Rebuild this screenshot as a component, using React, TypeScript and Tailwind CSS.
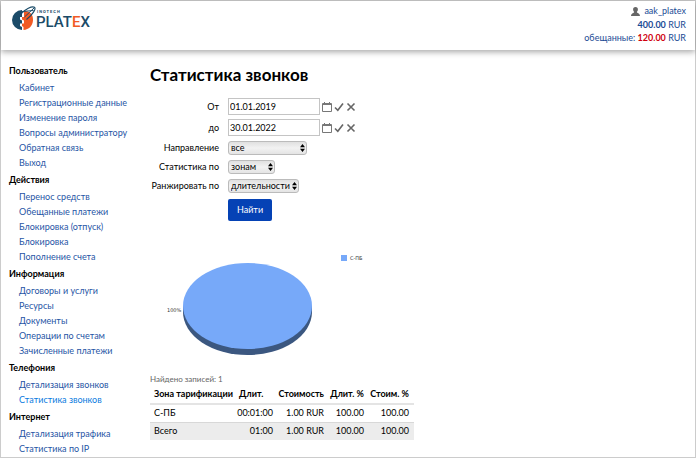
import type { ReactNode } from "react";

type MenuGroup = {
  title: string;
  items: string[];
};

const menu: MenuGroup[] = [
  {
    title: "Пользователь",
    items: [
      "Кабинет",
      "Регистрационные данные",
      "Изменение пароля",
      "Вопросы администратору",
      "Обратная связь",
      "Выход",
    ],
  },
  {
    title: "Действия",
    items: [
      "Перенос средств",
      "Обещанные платежи",
      "Блокировка (отпуск)",
      "Блокировка",
      "Пополнение счета",
    ],
  },
  {
    title: "Информация",
    items: [
      "Договоры и услуги",
      "Ресурсы",
      "Документы",
      "Операции по счетам",
      "Зачисленные платежи",
    ],
  },
  {
    title: "Телефония",
    items: ["Детализация звонков", "Статистика звонков"],
  },
  {
    title: "Интернет",
    items: ["Детализация трафика", "Статистика по IP"],
  },
];

const activeItem = "Статистика звонков";

function Logo() {
  return (
    <svg width="80" height="28" viewBox="0 0 80 28" role="img" aria-label="Inotech Platex">
      <path
        d="M10 5A10 10 0 0 0 10 25V22L8 21V18.500H10V15.500L8 14.500V12H10Z"
        fill="#1b4b68"
      />
      <path
        d="M12 6C18 5.500 21.500 10 21 15.500C20.500 21 17 24.500 11.500 25V22L10 21V18.500H12V15.500L10 14.500V12H12Z"
        fill="#f15a24"
      />
      <path
        d="M9 9C13 4 20 .8 22.500 2.200C24.500 4 20 10 14.500 14.500"
        fill="none"
        stroke="#1b4b68"
        strokeWidth="1.200"
      />
      <path d="M10 6.500L21.500 5.500M12.500 12L22 3" stroke="#1b4b68" strokeWidth="1" />
      <text x="25" y="8" fontSize="4" fontWeight="700" className="fill-[#1b4b68] font-['Roboto',sans-serif] tracking-[1px]">
        INOTECH
      </text>
      <text x="24" y="22" fontSize="15" fontWeight="500" className="fill-[#1b4b68] font-['Roboto',sans-serif]">
        PLAT
        <tspan fill="#f15a24">E</tspan>X
      </text>
    </svg>
  );
}

function Header() {
  return (
    <header className="flex h-[49px] items-start justify-between bg-white pt-[3px] pr-[9px] pl-[11px] shadow-[0_2px_6px_rgba(0,0,0,0.35)]">
      <a href="#home" className="mt-px">
        <Logo />
      </a>
      <div className="text-right leading-[14px] text-[#1a4a94]">
        <a href="#profile" className="flex items-center justify-end gap-1">
          <svg width="9" height="9" viewBox="0 0 9 9" fill="#666">
            <path d="M4.500 0C6.200 0 7 1 6.900 2.500C6.800 3.800 6.300 4.600 5.800 5C5.900 6 8.800 6 9 9H0C.2 6 3.100 6 3.200 5C2.700 4.600 2.200 3.800 2.100 2.500C2 1 2.800 0 4.500 0Z" />
          </svg>
          aak_platex
        </a>
        <p className="leading-[13px]">
          <b>400.00</b> RUR
        </p>
        <p>
          обещанные: <b className="text-[#d0000f]">120.00</b> RUR
        </p>
      </div>
    </header>
  );
}

function Sidebar() {
  return (
    <nav className="w-[140px] shrink-0 pl-2">
      {menu.map((group) => (
        <section key={group.title}>
          <h2 className="leading-[19px] font-bold text-black">{group.title}</h2>
          <ul className="pl-[10px] leading-[15px] whitespace-nowrap">
            {group.items.map((item) => (
              <li key={item}>
                <a
                  href="#menu"
                  className={item === activeItem ? "text-[#0a7be0]" : "text-[#1f55a5]"}
                >
                  {item}
                </a>
              </li>
            ))}
          </ul>
        </section>
      ))}
    </nav>
  );
}

function DateField({ id, value }: { id: string; value: string }) {
  return (
    <div className="flex items-center gap-[2px]">
      <input
        id={id}
        type="text"
        defaultValue={value}
        className="h-[17px] w-[92px] border border-[#c4c4c4] bg-white px-px text-black"
      />
      <button type="button" aria-label="Календарь">
        <svg width="10" height="10" viewBox="0 0 10 10" fill="none" stroke="#777">
          <path d="M.5 1.500H9.500V9.500H.5ZM.5 2.500H9.500M2.500 0V3M7.500 0V3" />
        </svg>
      </button>
      <button type="button" aria-label="Применить">
        <svg width="10" height="10" viewBox="0 0 10 10" fill="none" stroke="#666" strokeWidth="1.600">
          <path d="M1 5.500L3.800 8.300L9 1.500" />
        </svg>
      </button>
      <button type="button" aria-label="Очистить">
        <svg width="10" height="10" viewBox="0 0 10 10" fill="none" stroke="#666" strokeWidth="1.600">
          <path d="M1.500 1.500L8.500 8.500M8.500 1.500L1.500 8.500" />
        </svg>
      </button>
    </div>
  );
}

function SelectField({
  id,
  value,
  className,
}: {
  id: string;
  value: string;
  className: string;
}) {
  return (
    <div className={`relative ${className}`}>
      <select
        id={id}
        className="block h-[14px] w-full appearance-none rounded-[3px] border border-[#bbb] bg-linear-to-b from-[#e0e0e0] via-[#f2f2f2] to-[#e4e4e4] pl-[2px] leading-3 text-black"
      >
        <option>{value}</option>
      </select>
      <svg
        width="5"
        height="8"
        viewBox="0 0 5 8"
        className="pointer-events-none absolute top-[3px] right-[2px] fill-black"
      >
        <path d="M2.500 0L5 3.300H0ZM2.500 8L5 4.700H0Z" />
      </svg>
    </div>
  );
}

function Field({ id, label, children }: { id: string; label: string; children: ReactNode }) {
  return (
    <div className="flex items-center gap-[9px]">
      <label htmlFor={id} className="w-[69px] shrink-0 text-right whitespace-nowrap">
        {label}
      </label>
      {children}
    </div>
  );
}

function SearchForm() {
  return (
    <form>
      <div className="flex flex-col gap-[5px]">
        <div className="flex flex-col gap-1">
          <Field id="from" label="От">
            <DateField id="from" value="01.01.2019" />
          </Field>
          <Field id="to" label="до">
            <DateField id="to" value="30.01.2022" />
          </Field>
        </div>
        <Field id="direction" label="Направление">
          <SelectField id="direction" value="все" className="w-[79px]" />
        </Field>
        <Field id="stat" label="Статистика по">
          <SelectField id="stat" value="зонам" className="w-[47px]" />
        </Field>
        <Field id="rank" label="Ранжировать по">
          <SelectField id="rank" value="длительности" className="w-[71px]" />
        </Field>
      </div>
      <button
        type="button"
        className="mt-[6px] ml-[78px] h-[22px] w-11 rounded-[2px] bg-[#0542b5] text-white"
      >
        Найти
      </button>
    </form>
  );
}

function PieChart() {
  return (
    <svg
      width="240"
      height="110"
      viewBox="0 0 240 110"
      className="mt-[28px] block font-['DejaVu_Sans',sans-serif] text-[5px]"
    >
      <path d="M33 57V63A64.500 43 0 0 0 162 63V57Z" fill="#3b5780" />
      <ellipse cx="97.500" cy="57" rx="64.500" ry="43" fill="#77a9f9" />
      <text x="17" y="63" fill="#333">
        100%
      </text>
      <rect x="191" y="6" width="6" height="6" fill="#77a9f9" />
      <text x="200" y="11" fill="#333">
        С-ПБ
      </text>
    </svg>
  );
}

function ResultTable() {
  return (
    <table className="w-[264px] table-fixed text-right text-black">
      <colgroup>
        <col className="w-[84px]" />
        <col className="w-[44px]" />
        <col className="w-[50px]" />
        <col className="w-[41px]" />
        <col className="w-[45px]" />
      </colgroup>
      <thead>
        <tr className="h-[19px] border-b-2 border-[#e4e4e4] whitespace-nowrap">
          <th className="pl-1 text-left">Зона тарификации</th>
          <th className="pl-[5px] text-left">Длит.</th>
          <th className="pr-1">Стоимость</th>
          <th className="pr-[5px]">Длит. %</th>
          <th className="pr-[5px]">Стоим. %</th>
        </tr>
      </thead>
      <tbody>
        <tr className="h-[18px] border-b border-[#d8d8d8]">
          <td className="pl-1 text-left">С-ПБ</td>
          <td className="pr-[5px]">00:01:00</td>
          <td className="pr-1">1.00 RUR</td>
          <td className="pr-[5px]">100.00</td>
          <td className="pr-[5px]">100.00</td>
        </tr>
        <tr className="h-[18px] bg-[#ececec]">
          <td className="pl-1 text-left">Всего</td>
          <td className="pr-[5px]">01:00</td>
          <td className="pr-1">1.00 RUR</td>
          <td className="pr-[5px]">100.00</td>
          <td className="pr-[5px]">100.00</td>
        </tr>
      </tbody>
    </table>
  );
}

export default function App() {
  return (
    <div className="min-h-screen border border-[#ccc] bg-white font-['Lato',sans-serif] text-[9px] leading-3 text-black">
      <Header />
      <div className="flex pt-[11px]">
        <Sidebar />
        <main className="min-w-0 flex-1 pl-[9px]">
          <h1 className="mt-[2px] mb-[11px] text-[17px] leading-6 font-bold">{activeItem}</h1>
          <SearchForm />
          <PieChart />
          <p className="mt-[14px] text-[8px] leading-3 text-[#666]">Найдено записей: 1</p>
          <ResultTable />
        </main>
      </div>
    </div>
  );
}
